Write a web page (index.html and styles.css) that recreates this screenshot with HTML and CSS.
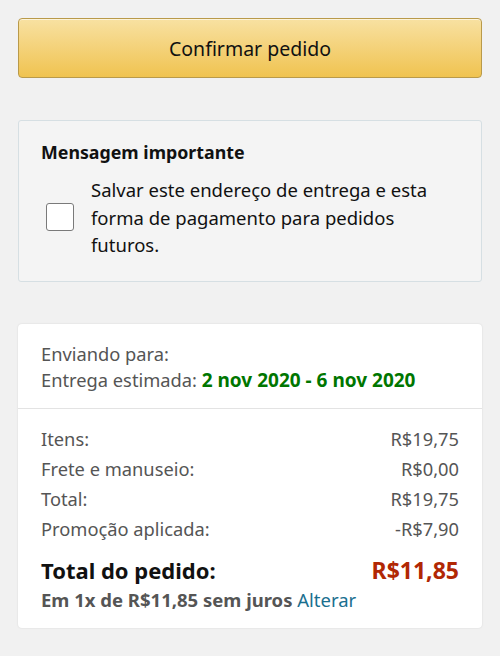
FILE: index.html
```html
<!DOCTYPE html>
<html lang="pt-BR">
<head>
    <meta charset="UTF-8">
    <meta name="viewport" content="width=device-width, initial-scale=1.0">
    <title>Confirmar pedido</title>
    <link rel="stylesheet" href="styles.css">
</head>
<body>
    <div class="page">
        <button class="btn-confirm">Confirmar pedido</button>

        <div class="notice">
            <h3 class="notice-title">Mensagem importante</h3>
            <label class="notice-row">
                <span class="check"></span>
                <span class="notice-text">Salvar este endereço de entrega e esta forma de pagamento para pedidos futuros.</span>
            </label>
        </div>

        <div class="summary">
            <div class="ship">
                <div>Enviando para:</div>
                <div>Entrega estimada: <span class="date">2 nov 2020 - 6 nov 2020</span></div>
            </div>
            <div class="lines">
                <div class="line"><span>Itens:</span><span>R$19,75</span></div>
                <div class="line"><span>Frete e manuseio:</span><span>R$0,00</span></div>
                <div class="line"><span>Total:</span><span>R$19,75</span></div>
                <div class="line"><span>Promoção aplicada:</span><span>-R$7,90</span></div>
                <div class="line grand"><span>Total do pedido:</span><span class="price">R$11,85</span></div>
                <div class="installments">Em 1x de R$11,85 sem juros <a href="#" class="link">Alterar</a></div>
            </div>
        </div>
    </div>
</body>
</html>
```

FILE: styles.css
```css
body{
    margin: 0;
    background-color: #f1f1f1;
    font-family: "Noto Sans", "Open Sans", sans-serif;
    color: #111;
}

.page{
    padding: 18px;
    display: flex;
    flex-direction: column;
    gap: 42px;
}

.btn-confirm{
    height: 60px;
    width: 100%;
    border: 1px solid #b99a4a;
    border-radius: 4px;
    background: linear-gradient(to bottom, #f8e1a2, #f0c350);
    font-family: inherit;
    font-size: 19.5px;
    color: #111;
    box-shadow: 0 1px 0 rgba(255,255,255,0.6) inset;
}

.notice{
    background-color: #f4f4f4;
    border: 1px solid #d6dfe3;
    border-radius: 3px;
    padding: 19px 22px 22px;
}

.notice-title{
    margin: 0 0 12px;
    font-size: 17.8px;
    line-height: 24px;
    font-weight: bold;
    color: #111;
}

.notice-row{
    display: flex;
    align-items: center;
    gap: 17px;
}

.check{
    flex: none;
    width: 26px;
    height: 26px;
    margin-left: 5px;
    border: 1.5px solid #7a7a7a;
    border-radius: 3px;
    background-color: #fff;
}

.notice-text{
    max-width: 350px;
    font-size: 18.5px;
    line-height: 27.5px;
    color: #111;
}

.summary{
    background-color: #fff;
    border-radius: 4px;
    box-shadow: 0 0 2px rgba(0,0,0,0.12);
    color: #555;
    font-size: 18.3px;
}

.ship{
    padding: 17px 23px 15px;
    line-height: 26px;
    border-bottom: 1px solid #e3e3e3;
}

.date{
    color: #007600;
    font-weight: bold;
    font-size: 19px;
}

.lines{
    padding: 15px 23px 16px;
}

.line{
    display: flex;
    justify-content: space-between;
    line-height: 30px;
}

.grand{
    margin-top: 11px;
    font-size: 22px;
    font-weight: bold;
    color: #111;
}

.price{
    color: #b12704;
    font-size: 23px;
}

.installments{
    line-height: 24px;
    margin-top: 3px;
    font-weight: bold;
    font-size: 18.5px;
}

.link{
    color: #1a6f8f;
    font-weight: normal;
    text-decoration: none;
}
```
